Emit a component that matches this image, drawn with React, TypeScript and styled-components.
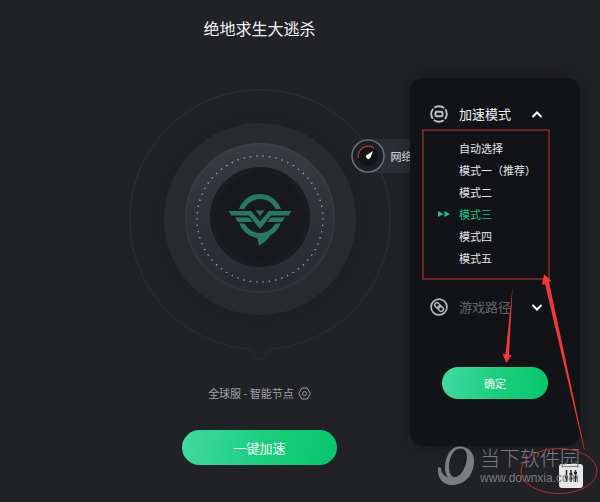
import React from 'react';
import styled, { createGlobalStyle } from 'styled-components';

const GlobalStyle = createGlobalStyle`
  * { box-sizing: border-box; }
  body {
    margin: 0;
    background: #212226;
    color: #f2f3f4;
    font-family: 'Noto Sans CJK SC', sans-serif;
    font-size: 11px;
  }
  button { font-family: inherit; border: 0; padding: 0; cursor: pointer; }
`;

const Page = styled.div`
  position: relative;
  min-height: 100vh;
  overflow: hidden;
`;

const Main = styled.main`
  display: flex;
  flex-direction: column;
  align-items: center;
  padding: 16px 81px 36px 0;
`;

const Title = styled.h1`
  margin: 0;
  font-size: 16px;
  line-height: 24px;
  font-weight: 400;
`;

const Stage = styled.section`
  position: relative;
  width: 264px;
  height: 276px;
  margin-top: 48px;
`;

const DialArt = styled.svg`
  display: block;
`;

const NetworkTab = styled.button`
  position: absolute;
  left: 223px;
  top: 51px;
  display: flex;
  align-items: center;
  gap: 6px;
  width: 120px;
  height: 34px;
  border-radius: 17px;
  background: #2b2e33;
  color: #e4e5e6;
  font-size: 11px;
`;

const NodeRow = styled.button`
  display: flex;
  align-items: center;
  gap: 4px;
  margin-top: 19px;
  height: 20px;
  background: none;
  color: #a2a4a7;
  font-size: 11px;
  line-height: 20px;
`;

const PillButton = styled.button<{ $size: 'large' | 'small' }>`
  width: ${(p) => (p.$size === 'large' ? 155 : 106)}px;
  height: ${(p) => (p.$size === 'large' ? 35 : 32)}px;
  border-radius: 18px;
  background: linear-gradient(100deg, #43d9a3 0%, #1dce80 50%, #06c66c 100%);
  color: #f0fff8;
  font-size: ${(p) => (p.$size === 'large' ? 13 : 11)}px;
`;

const StartButton = styled(PillButton)`
  margin-top: 27px;
`;

const Panel = styled.aside`
  position: absolute;
  top: 78px;
  right: 20px;
  width: 170px;
  display: flex;
  flex-direction: column;
  padding: 26px 20px 47px;
  border-radius: 14px;
  background: #111317;
  box-shadow: 0 0 14px rgba(10, 11, 14, 0.45);
`;

const SectionHeader = styled.button<{ $muted?: boolean }>`
  display: grid;
  grid-template-columns: 20px 1fr 14px;
  column-gap: 9px;
  align-items: center;
  width: 114px;
  height: 20px;
  background: none;
  color: ${(p) => (p.$muted ? '#62656a' : '#f2f3f4')};
  font-size: 13px;
  line-height: 20px;
  text-align: left;
`;

const ModeList = styled.ul`
  list-style: none;
  margin: 13px 0 28px;
  padding: 0;
`;

const ModeButton = styled.button<{ $active?: boolean }>`
  display: grid;
  grid-template-columns: 14px 1fr;
  column-gap: 8px;
  align-items: center;
  width: 100%;
  height: 22px;
  padding-left: 7px;
  background: none;
  color: ${(p) => (p.$active ? '#1cc184' : '#e6e7e8')};
  font-size: 11px;
  line-height: 22px;
  text-align: left;
  white-space: nowrap;
`;

const ConfirmButton = styled(PillButton)`
  margin: 50px 0 0 12px;
`;

const Watermark = styled.div`
  position: absolute;
  right: 20px;
  bottom: 16px;
  display: flex;
  align-items: center;
  gap: 5px;
  color: #7b7d80;
  pointer-events: none;
`;

const WatermarkText = styled.div`
  display: flex;
  flex-direction: column;
  white-space: nowrap;
`;

const WatermarkName = styled.span`
  font-size: 20px;
  font-weight: 300;
  line-height: 24px;
`;

const WatermarkUrl = styled.span`
  font-family: 'Liberation Sans', sans-serif;
  font-size: 12px;
  line-height: 16px;
`;

const SettingsButton = styled.button`
  position: absolute;
  right: 17px;
  bottom: 14px;
  display: grid;
  place-items: center;
  width: 24px;
  height: 24px;
  border-radius: 3px;
  background: #e6e6e6;
`;

const Annotations = styled.svg`
  position: absolute;
  top: 0;
  right: 0;
  pointer-events: none;
`;

function Dial() {
  return (
    <DialArt width="264" height="276" viewBox="128 88 264 276" aria-hidden="true">
      <defs>
        <linearGradient id="band" x1="0" y1="0" x2="0" y2="1">
          <stop offset="0" stopColor="#3a3b40" />
          <stop offset="0.5" stopColor="#303137" />
          <stop offset="1" stopColor="#272931" />
        </linearGradient>
        <linearGradient id="rim" x1="0" y1="0" x2="0" y2="1">
          <stop offset="0" stopColor="#3e3f44" />
          <stop offset="1" stopColor="#303135" />
        </linearGradient>
        <radialGradient id="halo">
          <stop offset="0.75" stopColor="#1e1f23" />
          <stop offset="1" stopColor="#212226" />
        </radialGradient>
        <clipPath id="ringParts">
          <path d="M230 188 H290 V209 H230 Z M230 223.500 H290 V250 H230 Z" />
        </clipPath>
      </defs>
      <circle cx="260" cy="219" r="118" fill="url(#halo)" />
      <path
        d="M247 349 A130 130 0 1 1 273 349 C265 350 265 360 260 360 C255 360 255 350 247 349 Z"
        fill="none"
        stroke="#2f3034"
      />
      <circle cx="260" cy="219" r="96" fill="#292a2e" />
      <circle cx="260" cy="218" r="74" fill="url(#band)" stroke="url(#rim)" strokeWidth="2" />
      <circle
        cx="260"
        cy="219"
        r="63"
        fill="none"
        stroke="#9a9ca6"
        strokeWidth="1.5"
        strokeLinecap="round"
        pathLength="372"
        strokeDasharray="0.1 5.9"
      />
      <circle cx="260" cy="217" r="50" fill="#1b1c20" />
      <circle cx="260" cy="217" r="45" fill="#17191d" />
      <g fill="#28795f">
        <circle cx="260" cy="216" r="19.500" fill="none" stroke="#28795f" strokeWidth="5" clipPath="url(#ringParts)" />
        <path d="M257 236 H270 Q265 243 259 245.500 Z" />
        <path d="M228.500 211 H251 L260 221.500 L269 211 H291.500 L288.500 215.500 H271 L260 229 L249 215.500 H231.500 Z" />
        <path d="M235 217.500 H249 L253 222 H238 Z M285 217.500 H271 L267 222 H282 Z" />
        <path d="M255.500 210.500 H264.500 L260 216 Z" />
      </g>
    </DialArt>
  );
}

function Gauge() {
  return (
    <svg width="34" height="34" viewBox="0 0 34 34" aria-hidden="true">
      <circle cx="17" cy="17" r="16" fill="#1c2025" stroke="#666c72" strokeWidth="1.6" />
      <circle cx="17" cy="17" r="10" fill="#121418" />
      <path d="M7.500 19 A10 10 0 0 1 23 9" fill="none" stroke="#b8363d" strokeWidth="1.2" />
      <path d="M22 12 L19.500 18.500 A2.300 2.300 0 1 1 15.800 16 Z" fill="#fff" />
    </svg>
  );
}

function NodeIcon() {
  return (
    <svg width="13" height="13" viewBox="0 0 13 13" fill="none" stroke="#9fa1a4" aria-hidden="true">
      <path d="M3.800 1 H9.200 L12.300 6.500 L9.200 12 H3.800 L0.700 6.500 Z" strokeLinejoin="round" />
      <circle cx="6.500" cy="6.500" r="2" />
    </svg>
  );
}

function ModeIcon() {
  return (
    <svg width="18" height="18" viewBox="0 0 18 18" fill="none" stroke="#bfc1c4" aria-hidden="true">
      <circle cx="9" cy="9" r="7.800" strokeWidth="1.900" pathLength="48" strokeDasharray="10.500 1.500" strokeDashoffset="5" />
      <rect x="5.500" y="6.700" width="7" height="4.600" rx="1" strokeWidth="2" />
    </svg>
  );
}

function PathIcon() {
  return (
    <svg width="18" height="18" viewBox="0 0 18 18" fill="none" stroke="#b5b7ba" aria-hidden="true">
      <circle cx="9" cy="9" r="7.900" strokeWidth="1.700" />
      <g transform="rotate(45 9 9)" strokeWidth="1.500">
        <rect x="3.800" y="6.800" width="6" height="4.400" rx="2.200" />
        <rect x="8.200" y="6.800" width="6" height="4.400" rx="2.200" />
      </g>
    </svg>
  );
}

function Chevron({ up }: { up?: boolean }) {
  return (
    <svg width="14" height="10" viewBox="0 0 14 10" fill="none" stroke="#fff" strokeWidth="2" aria-hidden="true">
      <path d={up ? 'M2.500 8 L7 3.500 L11.500 8' : 'M2.500 3 L7 7.500 L11.500 3'} />
    </svg>
  );
}

function ActiveMarker() {
  return (
    <svg width="14" height="8" viewBox="0 0 14 8" fill="#1cc184" aria-hidden="true">
      <path d="M1 1 L6.500 4 L1 7 Z M7.500 1 L13 4 L7.500 7 Z" />
    </svg>
  );
}

function SiteLogo() {
  return (
    <svg width="38" height="40" viewBox="0 0 38 40" aria-hidden="true">
      <g fill="#7b7d80">
        <path
          fillRule="evenodd"
          d="M22 0.500 C32 0.500 37.500 7 37 16 C36.500 29 28 39 15 39 C6 39 0 32 1 22 C2 21 3 21 4 22 C4 27 7 30 11 31.500 C9 29 7.500 25 8 20 C9 9 14 1 22 0.500 Z M23 2.500 C16 3 12 12 12 21 C12 28 15 32 19 31 C26 29 30 18 30 10 C30 5 27 2 23 2.500 Z"
        />
      </g>
    </svg>
  );
}

function Sliders() {
  return (
    <svg width="14" height="14" viewBox="0 0 14 14" stroke="#292a2d" strokeWidth="1.500" aria-hidden="true">
      <path d="M2.500 1 V13 M7 1 V13 M11.500 1 V13" />
      <path d="M1 8.500 H4 M5.500 5 H8.500 M5.500 9.500 H8.500 M10 4 H13 M10 8.500 H13" strokeWidth="1.800" />
    </svg>
  );
}

const modes = ['自动选择', '模式一（推荐）', '模式二', '模式三', '模式四', '模式五'];

export default function App() {
  return (
    <Page>
      <GlobalStyle />
      <Main>
        <Title>绝地求生大逃杀</Title>
        <Stage>
          <Dial />
          <NetworkTab>
            <Gauge />
            网络
          </NetworkTab>
        </Stage>
        <NodeRow>
          全球服 - 智能节点
          <NodeIcon />
        </NodeRow>
        <StartButton $size="large">一键加速</StartButton>
      </Main>
      <Panel>
        <SectionHeader aria-expanded="true">
          <ModeIcon />
          加速模式
          <Chevron up />
        </SectionHeader>
        <ModeList>
          {modes.map((mode) => {
            const active = mode === '模式三';
            return (
              <li key={mode}>
                <ModeButton $active={active} aria-pressed={active}>
                  {active ? <ActiveMarker /> : <span />}
                  {mode}
                </ModeButton>
              </li>
            );
          })}
        </ModeList>
        <SectionHeader $muted aria-expanded="false">
          <PathIcon />
          游戏路径
          <Chevron />
        </SectionHeader>
        <ConfirmButton $size="small">确定</ConfirmButton>
      </Panel>
      <SettingsButton aria-label="设置">
        <Sliders />
      </SettingsButton>
      <Watermark>
        <SiteLogo />
        <WatermarkText>
          <WatermarkName>当下软件园</WatermarkName>
          <WatermarkUrl>www.downxia.com</WatermarkUrl>
        </WatermarkText>
      </Watermark>
      <Annotations width="180" height="502" viewBox="420 0 180 502" aria-hidden="true">
        <rect x="423" y="130" width="126" height="149" fill="none" stroke="#8e2b2e" strokeWidth="1.500" />
        <ellipse cx="559" cy="471" rx="38" ry="22.500" fill="none" stroke="#b02c31" />
        <g fill="#f2383a">
          <path d="M512.500 288 L509 355 L511.500 355 L506.500 363 L502.500 354 L505.500 354 Z" />
          <path d="M584.500 449 L549 282 L551.500 281 L544 274 L542 285 L545 284 L584 449 Z" />
        </g>
      </Annotations>
    </Page>
  );
}
